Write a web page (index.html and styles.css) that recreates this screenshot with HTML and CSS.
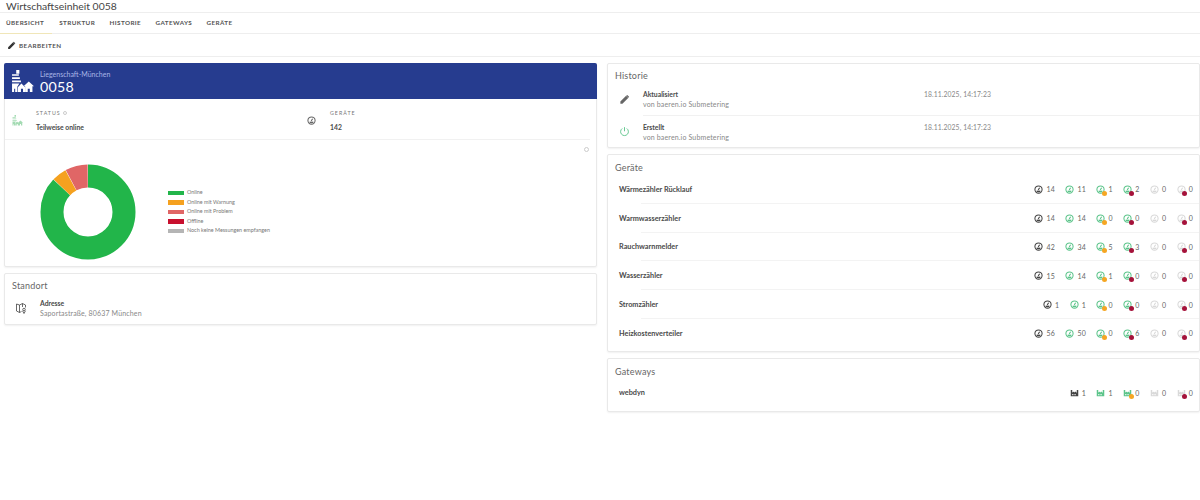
FILE: index.html
```html
<!DOCTYPE html>
<html lang="de">
<head>
<meta charset="utf-8">
<title>Wirtschaftseinheit 0058</title>
<link rel="stylesheet" href="styles.css">
</head>
<body>
<svg class="defs" width="0" height="0" aria-hidden="true">
  <symbol id="gauge" viewBox="0 0 12 12">
    <circle cx="6" cy="6" r="4.800" fill="none" stroke="currentColor" stroke-width="1.400"/>
    <path d="M3.500 8.400h5" fill="none" stroke="currentColor" stroke-width="1.800"/>
    <path d="M5.600 6.500 7.600 3.600" fill="none" stroke="currentColor" stroke-width="1.400"/>
  </symbol>
  <symbol id="plant" viewBox="0 0 12 12">
    <path d="M1 11V2.500h2V6l2.500-1.500V6L8 4.500V6h1V2.500h2V11zM3 8v1.500h1.500V8zM6 8v1.500h1.500V8z" fill="currentColor" fill-rule="evenodd"/>
  </symbol>
</svg>

<header class="title">Wirtschaftseinheit 0058</header>
<nav class="tabs">
  <a class="tab active">Übersicht</a>
  <a class="tab">Struktur</a>
  <a class="tab">Historie</a>
  <a class="tab">Gateways</a>
  <a class="tab">Geräte</a>
</nav>
<div class="toolbar">
  <svg class="edit-icon" viewBox="0 0 24 24"><path d="M3 21v-4.500L15.500 4l4.500 4.500L7.500 21zM17 2.500l1-.5 4 4-.5 1-1.500 1.000L16 3.500z" fill="#333"/></svg>
  <span>Bearbeiten</span>
</div>

<main class="grid">
  <div class="col">
    <section class="card">
      <div class="banner">
        <svg class="banner-icon" viewBox="0 0 22 22">
          <path d="M5 0h3v3.500H5zM1 4h6.500v1.600H1zM1 7h7.500v1.600H1zM1 10h8.500v1.600H1zM1 13h7l-2 3v5H4v-3H3v3H1z" fill="#fff"/>
          <path d="M5 16.500 8.500 13l3.500 3.500V21H10v-3H8v3H5z" fill="#fff" transform="translate(1.500 0)"/>
          <path d="M12 15.500l5-4.500 5 4.500h-1.500V21h-2.500v-3h-2v3h-2.500v-5.500z" fill="#fff"/>
        </svg>
        <div>
          <div class="banner-sub">Liegenschaft-München</div>
          <div class="banner-num">0058</div>
        </div>
      </div>
      <div class="facts">
        <div class="fact">
          <svg class="fact-icon green-soft" viewBox="0 0 22 22"><path d="M5 0h3v3.500H5zM1 4h6.500v1.600H1zM1 7h7.500v1.600H1zM1 10h8.500v1.600H1zM1 13h7l-2 3v5H4v-3H3v3H1zM6.500 16.500 10 13l3.500 3.500V21h-2v-3h-2v3h-3zM12 15.500l5-4.500 5 4.500h-1.500V21h-2.500v-3h-2v3h-2.500v-5.500z" fill="currentColor"/></svg>
          <div>
            <div class="fact-label">Status <span class="info"></span></div>
            <div class="fact-value">Teilweise online</div>
          </div>
        </div>
        <div class="fact">
          <svg class="fact-icon small dark"><use href="#gauge"/></svg>
          <div>
            <div class="fact-label">Geräte</div>
            <div class="fact-value">142</div>
          </div>
        </div>
      </div>
      <div class="chart">
        <span class="info chart-info"></span>
        <svg class="donut" viewBox="0 0 96 96">
          <circle class="slice s-green" cx="48" cy="48" r="36" pathLength="360" stroke-dasharray="313 47"/>
          <circle class="slice s-orange" cx="48" cy="48" r="36" pathLength="360" stroke-dasharray="18 342" stroke-dashoffset="-313.500"/>
          <circle class="slice s-red" cx="48" cy="48" r="36" pathLength="360" stroke-dasharray="27.500 332.500" stroke-dashoffset="-332"/>
        </svg>
        <ul class="legend">
          <li><i class="swatch c-green"></i>Online</li>
          <li><i class="swatch c-orange"></i>Online mit Warnung</li>
          <li><i class="swatch c-red"></i>Online mit Problem</li>
          <li><i class="swatch c-crimson"></i>Offline</li>
          <li><i class="swatch c-grey"></i>Noch keine Messungen empfangen</li>
        </ul>
      </div>
    </section>

    <section class="card">
      <h2 class="standort">Standort</h2>
      <div class="address">
        <svg class="map-icon" viewBox="0 0 24 24" fill="none" stroke="#444" stroke-width="1.600"><path d="M13 19l-4 2-6-3V4l6 2 6-3 6 3v5M9 6v15M15 3v7"/><circle cx="18" cy="15" r="2.500"/><path d="M18 23l-3-5.500M18 23l3-5.500"/></svg>
        <div>
          <div class="strong">Adresse</div>
          <div class="muted">Saportastraße, 80637 München</div>
        </div>
      </div>
    </section>
  </div>

  <div class="col">
    <section class="card">
      <h2 class="historie">Historie</h2>
      <div class="event">
        <svg class="event-icon" viewBox="0 0 24 24"><path d="M3 21v-4.500L15.500 4l4.500 4.500L7.500 21zM17 2.500l1-.5 4 4-.5 1-1.500 1.000L16 3.500z" fill="#666"/></svg>
        <div class="event-body">
          <div class="event-text"><div class="strong">Aktualisiert</div><div class="muted">von baeren.io Submetering</div></div>
          <div class="event-date">18.11.2025, 14:17:23</div>
        </div>
      </div>
      <div class="event">
        <svg class="event-icon" viewBox="0 0 24 24" fill="none" stroke="#5cc48a" stroke-width="2"><path d="M12 2.500v9M7 5.500a8.500 8.500 0 1 0 10 0"/></svg>
        <div class="event-body last">
          <div class="event-text"><div class="strong">Erstellt</div><div class="muted">von baeren.io Submetering</div></div>
          <div class="event-date">18.11.2025, 14:17:23</div>
        </div>
      </div>
    </section>

    <section class="card devices">
      <h2>Geräte</h2>
      <div class="row"><span class="name">Wärmezähler Rücklauf</span><div class="stats">
        <span class="stat"><svg class="k-dark"><use href="#gauge"/></svg>14</span>
        <span class="stat"><svg class="k-green"><use href="#gauge"/></svg>11</span>
        <span class="stat"><span class="ic"><svg class="k-green"><use href="#gauge"/></svg><i class="dot orange"></i></span>1</span>
        <span class="stat"><span class="ic"><svg class="k-green"><use href="#gauge"/></svg><i class="dot crimson"></i></span>2</span>
        <span class="stat"><svg class="k-pale"><use href="#gauge"/></svg>0</span>
        <span class="stat"><span class="ic"><svg class="k-pale"><use href="#gauge"/></svg><i class="dot crimson"></i></span>0</span>
      </div></div>
      <div class="row"><span class="name">Warmwasserzähler</span><div class="stats">
        <span class="stat"><svg class="k-dark"><use href="#gauge"/></svg>14</span>
        <span class="stat"><svg class="k-green"><use href="#gauge"/></svg>14</span>
        <span class="stat"><span class="ic"><svg class="k-green"><use href="#gauge"/></svg><i class="dot orange"></i></span>0</span>
        <span class="stat"><span class="ic"><svg class="k-green"><use href="#gauge"/></svg><i class="dot crimson"></i></span>0</span>
        <span class="stat"><svg class="k-pale"><use href="#gauge"/></svg>0</span>
        <span class="stat"><span class="ic"><svg class="k-pale"><use href="#gauge"/></svg><i class="dot crimson"></i></span>0</span>
      </div></div>
      <div class="row"><span class="name">Rauchwarnmelder</span><div class="stats">
        <span class="stat"><svg class="k-dark"><use href="#gauge"/></svg>42</span>
        <span class="stat"><svg class="k-green"><use href="#gauge"/></svg>34</span>
        <span class="stat"><span class="ic"><svg class="k-green"><use href="#gauge"/></svg><i class="dot orange"></i></span>5</span>
        <span class="stat"><span class="ic"><svg class="k-green"><use href="#gauge"/></svg><i class="dot crimson"></i></span>3</span>
        <span class="stat"><svg class="k-pale"><use href="#gauge"/></svg>0</span>
        <span class="stat"><span class="ic"><svg class="k-pale"><use href="#gauge"/></svg><i class="dot crimson"></i></span>0</span>
      </div></div>
      <div class="row"><span class="name">Wasserzähler</span><div class="stats">
        <span class="stat"><svg class="k-dark"><use href="#gauge"/></svg>15</span>
        <span class="stat"><svg class="k-green"><use href="#gauge"/></svg>14</span>
        <span class="stat"><span class="ic"><svg class="k-green"><use href="#gauge"/></svg><i class="dot orange"></i></span>1</span>
        <span class="stat"><span class="ic"><svg class="k-green"><use href="#gauge"/></svg><i class="dot crimson"></i></span>0</span>
        <span class="stat"><svg class="k-pale"><use href="#gauge"/></svg>0</span>
        <span class="stat"><span class="ic"><svg class="k-pale"><use href="#gauge"/></svg><i class="dot crimson"></i></span>0</span>
      </div></div>
      <div class="row"><span class="name">Stromzähler</span><div class="stats">
        <span class="stat"><svg class="k-dark"><use href="#gauge"/></svg>1</span>
        <span class="stat"><svg class="k-green"><use href="#gauge"/></svg>1</span>
        <span class="stat"><span class="ic"><svg class="k-green"><use href="#gauge"/></svg><i class="dot orange"></i></span>0</span>
        <span class="stat"><span class="ic"><svg class="k-green"><use href="#gauge"/></svg><i class="dot crimson"></i></span>0</span>
        <span class="stat"><svg class="k-pale"><use href="#gauge"/></svg>0</span>
        <span class="stat"><span class="ic"><svg class="k-pale"><use href="#gauge"/></svg><i class="dot crimson"></i></span>0</span>
      </div></div>
      <div class="row last"><span class="name">Heizkostenverteiler</span><div class="stats">
        <span class="stat"><svg class="k-dark"><use href="#gauge"/></svg>56</span>
        <span class="stat"><svg class="k-green"><use href="#gauge"/></svg>50</span>
        <span class="stat"><span class="ic"><svg class="k-green"><use href="#gauge"/></svg><i class="dot orange"></i></span>0</span>
        <span class="stat"><span class="ic"><svg class="k-green"><use href="#gauge"/></svg><i class="dot crimson"></i></span>6</span>
        <span class="stat"><svg class="k-pale"><use href="#gauge"/></svg>0</span>
        <span class="stat"><span class="ic"><svg class="k-pale"><use href="#gauge"/></svg><i class="dot crimson"></i></span>0</span>
      </div></div>
    </section>

    <section class="card gateways">
      <h2>Gateways</h2>
      <div class="row gateway last"><span class="name">webdyn</span><div class="stats">
        <span class="stat"><svg class="k-dark"><use href="#plant"/></svg>1</span>
        <span class="stat"><svg class="k-green"><use href="#plant"/></svg>1</span>
        <span class="stat"><span class="ic"><svg class="k-green"><use href="#plant"/></svg><i class="dot orange"></i></span>0</span>
        <span class="stat"><svg class="k-pale"><use href="#plant"/></svg>0</span>
        <span class="stat"><span class="ic"><svg class="k-pale"><use href="#plant"/></svg><i class="dot crimson"></i></span>0</span>
      </div></div>
    </section>
  </div>
</main>
</body>
</html>
```

FILE: styles.css
```css
* { box-sizing: border-box; }
html, body { margin: 0; padding: 0; background: #fff; }
body { font-family: Lato, "Open Sans", sans-serif; color: #333; height: 500px; overflow: hidden; }
.defs { position: absolute; }

.title { height: 13px; padding-left: 6px; font-size: 10.400px; line-height: 12px; color: #444; border-bottom: 1px solid #eee; }

.tabs { display: flex; height: 21px; border-bottom: 1px solid #eee; }
.tab { display: flex; align-items: center; padding: 0 7.200px 1px; font-size: 6.300px; font-weight: 700; letter-spacing: .4px; text-transform: uppercase; color: #555; }
.tab:first-child { padding-left: 6px; width: 52px; }
.tab.active { border-bottom: 1px solid #f0e6b8; height: 21px; }

.toolbar { display: flex; align-items: center; gap: 3px; height: 23px; padding-left: 7px; border-bottom: 1px solid #eee; font-size: 6.300px; font-weight: 700; letter-spacing: .45px; text-transform: uppercase; color: #555; }
.edit-icon { width: 9px; height: 9px; }

.grid { display: grid; grid-template-columns: 593px 593px; column-gap: 10px; padding: 6px 0 0 4px; }
.col { display: flex; flex-direction: column; gap: 6px; align-items: stretch; }
.card { background: #fff; border: 1px solid #e9e9e9; border-radius: 2px; box-shadow: 0 1px 2px rgba(0,0,0,.06); }
.card h2 { margin: 0; padding: 6px 7px 1px; font-size: 9px; line-height: 13px; font-weight: 400; color: #666; letter-spacing: .2px; }
.card h2.standort { padding-top: 5px; padding-bottom: 0; }
.card h2.historie { padding-top: 5px; padding-bottom: 0; }
.gateways h2 { padding-bottom: 0; }

.banner { display: flex; align-items: center; gap: 6px; height: 36px; margin: -1px -1px 0; padding-left: 7px; background: #263c8f; color: #fff; border-radius: 2px 2px 0 0; }
.banner-icon { width: 23px; height: 23px; flex: none; }
.banner-sub { font-size: 7px; line-height: 8px; color: #a9b6e6; padding-top: 3px; }
.banner-num { font-size: 14.200px; line-height: 17px; letter-spacing: .3px; }

.facts { display: grid; grid-template-columns: 298px 1fr; height: 41px; margin-right: 6px; border-bottom: 1px solid #f1f1f1; }
.fact { display: flex; align-items: center; padding: 2px 0 0 7px; gap: 13px; }
.fact + .fact { padding-left: 4px; gap: 14px; }
.fact-icon { width: 11px; height: 11px; flex: none; }
.fact-icon.small { width: 9px; height: 9px; }
.green-soft { color: #a4dbb3; }
.dark { color: #666; }
.fact-label { font-size: 5.300px; line-height: 8px; letter-spacing: 1px; text-transform: uppercase; color: #777; margin-bottom: 6px; }
.fact-value { font-size: 6.800px; line-height: 9px; font-weight: 700; color: #4a4a4a; }
.info { display: inline-block; width: 4px; height: 4px; border: 1px solid #ccc; border-radius: 50%; }

.chart { position: relative; display: flex; align-items: center; height: 126px; padding: 18px 0 0 35px; gap: 32px; }
.chart-info { position: absolute; top: 7px; right: 7px; width: 5px; height: 5px; }
.donut { width: 96px; height: 96px; transform: rotate(-90deg); flex: none; }
.slice { fill: none; stroke-width: 23; }
.s-green { stroke: #22b54a; }
.s-orange { stroke: #f5a11f; }
.s-red { stroke: #e06666; }
.legend { list-style: none; margin: 0; padding: 0; font-size: 5.400px; line-height: 9.600px; color: #777; }
.legend li { display: flex; align-items: center; gap: 3px; height: 9.600px; }
.swatch { display: block; width: 16px; height: 4.500px; }
.c-green { background: #22b54a; }
.c-orange { background: #f5a11f; }
.c-red { background: #e06666; }
.c-crimson { background: #c8102e; }
.c-grey { background: #b5b5b5; }

.address { display: flex; align-items: center; gap: 13px; padding: 6px 10px 6px; }
.map-icon { width: 12px; height: 12px; flex: none; }
.strong { font-size: 6.800px; line-height: 10px; font-weight: 700; color: #4a4a4a; }
.muted { font-size: 7px; line-height: 10px; color: #888; letter-spacing: .15px; }

.event { display: flex; align-items: center; }
.event-icon { width: 11px; height: 11px; flex: none; margin: 0 13px 0 11px; }
.event-body { flex: 1; display: flex; justify-content: space-between; height: 34px; padding: 7px 208px 0 0; border-bottom: 1px solid #f1f1f1; }
.event-body.last { border-bottom: 0; height: 31px; padding-top: 6px; }
.event-date { font-size: 6.800px; line-height: 10px; color: #888; letter-spacing: .1px; }

.row { position: relative; display: flex; align-items: center; justify-content: space-between; height: 28.800px; padding: 0 6px 0 11px; }
.row::after { content: ""; position: absolute; left: 33px; right: 0; bottom: 0; border-bottom: 1px solid #f3f3f3; }
.row.last::after { display: none; }
.devices { padding-bottom: 3px; }
.gateways { padding-bottom: 3px; }
.name { font-size: 7.300px; font-weight: 700; color: #4a4a4a; }
.stats { display: flex; align-items: center; gap: 10.500px; }
.stat { display: inline-flex; align-items: center; gap: 3px; font-size: 7px; color: #666; letter-spacing: .2px; }
.stat svg { width: 9px; height: 9px; display: block; }
.ic { position: relative; display: block; }
.dot { position: absolute; right: -1.500px; bottom: -2px; width: 5px; height: 5px; border-radius: 50%; }
.dot.orange { background: #f5a623; }
.dot.crimson { background: #a5123a; }
.k-dark { color: #444; }
.k-green { color: #5cc48a; }
.k-pale { color: #d9d9d9; }
.gateway { height: 30px; }
```
